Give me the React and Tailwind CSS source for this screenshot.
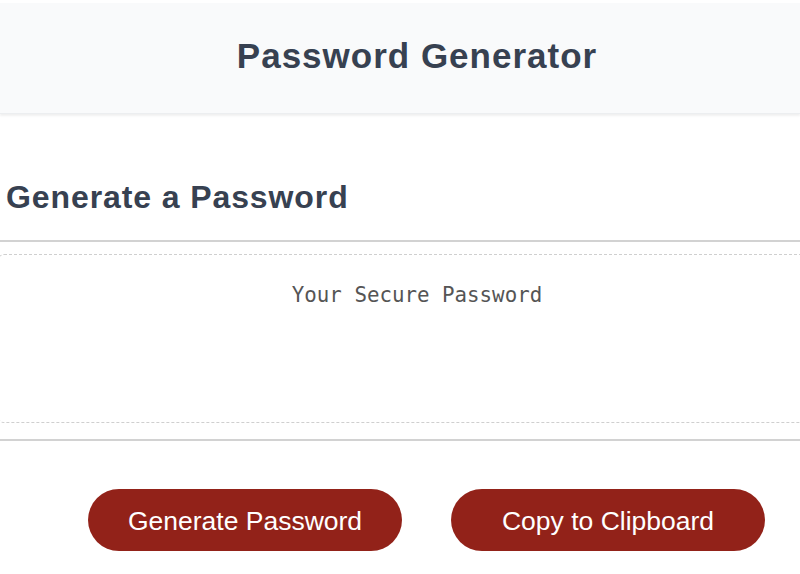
import React from 'react';

const App = () => {
    return (
        <div className="min-h-screen w-full bg-white overflow-hidden font-['Liberation_Sans',Arial,sans-serif]">
            {/* Header band */}
            <header className="mt-[3px] h-[111px] bg-[#f9fafb] flex items-center justify-center shadow-[0_2px_2px_rgba(0,0,0,0.06)] border-b border-[#eceef0]">
                <h1 className="text-[35px] font-bold text-[#374151] tracking-[1px] -mt-[3px] ml-[34px]">Password Generator</h1>
            </header>

            {/* Card */}
            <section className="w-[820px]">
                <div className="pt-[64px] pb-[24px] pl-[6px] border-b-2 border-[#d2d2d2]">
                    <h2 className="text-[32px] leading-[38px] font-bold text-[#374151] tracking-[0.9px]">Generate a Password</h2>
                </div>

                <div className="pt-[12px] pb-[16px] border-b-2 border-[#d2d2d2]">
                    <div className="h-[169px] rounded-[6px] border border-dashed border-[#cfcfcf] flex justify-center pt-[26px] -ml-[2px]">
                        <span className="text-[20.8px] leading-[28px] text-[#555] font-['DejaVu_Sans_Mono',monospace] ml-[16px]">Your Secure Password</span>
                    </div>
                </div>

                <div className="flex gap-[49px] pl-[88px] pt-[48px]">
                    <button className="w-[314px] h-[62px] rounded-full bg-[#922219] text-white text-[26.5px] pt-[4px]">
                        Generate Password
                    </button>
                    <button className="w-[314px] h-[62px] rounded-full bg-[#922219] text-white text-[26.5px] pt-[4px]">
                        Copy to Clipboard
                    </button>
                </div>
            </section>
        </div>
    );
};

export default App;
